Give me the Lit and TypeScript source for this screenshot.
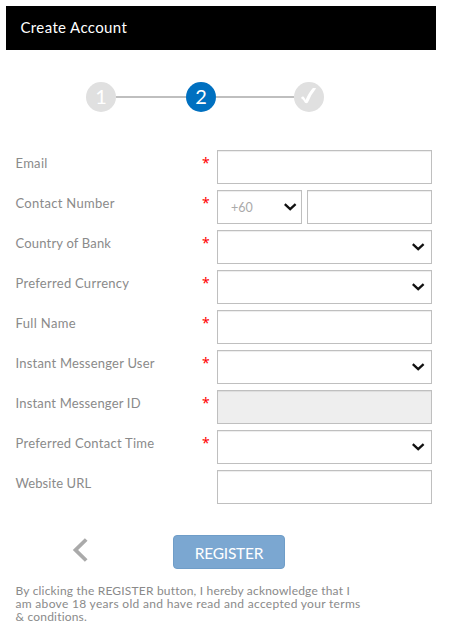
import { LitElement, html, css, svg, nothing } from "lit";
import { customElement } from "lit/decorators.js";
import { styleMap } from "lit/directives/style-map.js";

interface Field {
  label: string;
  kind: "text" | "select" | "phone" | "disabled";
  required: boolean;
  tracking: number;
}

const FIELDS: Field[] = [
  { label: "Email", kind: "text", required: true, tracking: 0.3 },
  { label: "Contact Number", kind: "phone", required: true, tracking: 0.3 },
  { label: "Country of Bank", kind: "select", required: true, tracking: 0.18 },
  { label: "Preferred Currency", kind: "select", required: true, tracking: 0.27 },
  { label: "Full Name", kind: "text", required: true, tracking: 0.35 },
  { label: "Instant Messenger User", kind: "select", required: true, tracking: 0.21 },
  { label: "Instant Messenger ID", kind: "disabled", required: true, tracking: 0.18 },
  { label: "Preferred Contact Time", kind: "select", required: true, tracking: 0.26 },
  { label: "Website URL", kind: "text", required: false, tracking: 0.08 },
];

const chevron = html`<svg class="chevron" width="14" height="10" viewBox="0 0 14 10" aria-hidden="true">
  ${svg`<path d="M1.8 2.2 L7.2 7.2 L12.6 2.2" fill="none" stroke="#111" stroke-width="2.3"/>`}
</svg>`;

@customElement("app-root")
export class AppRoot extends LitElement {
  static styles = css`
    :host {
      display: block;
      box-sizing: border-box;
      height: 635px;
      padding: 6px 14px 0 6px;
      overflow: hidden;
      background: #fff;
      color: #8a8a8a;
      font-family: Lato, "Liberation Sans", sans-serif;
    }
    * { box-sizing: border-box; }
    .header {
      height: 44px;
      margin: 0;
      padding-left: 14.5px;
      background: #000;
      color: #fff;
      font-size: 15px;
      font-weight: 400;
      line-height: 43px;
      letter-spacing: 0.37px;
    }
    .steps {
      display: flex;
      align-items: center;
      margin: 32px 0 0 80px;
    }
    .step {
      display: flex;
      align-items: center;
      justify-content: center;
      width: 30px;
      height: 30px;
      border-radius: 50%;
      background: #e0e0e0;
      color: #fff;
      font-size: 20px;
      line-height: 28px;
    }
    .step span { height: 30px; }
    .step.current { background: #0070c0; }
    .line { width: 70px; height: 2px; background: #bfbfbf; }
    .line.long { width: 78px; }
    .form {
      display: grid;
      grid-auto-rows: 34px;
      row-gap: 6px;
      margin: 38px 4px 0 9px;
    }
    .row {
      display: grid;
      grid-template-columns: 185px 17px 215px;
    }
    .label { padding-left: 0.5px; font-size: 13px; line-height: 27px; white-space: nowrap; }
    .star { padding-left: 2px; color: #f00; font: 14px/26px "Noto Sans", sans-serif; }
    .controls { display: flex; gap: 5px; }
    .box {
      display: flex;
      align-items: center;
      justify-content: space-between;
      flex: 1;
      min-width: 0;
      height: 34px;
      padding: 0 6px 0 13px;
      border: 1px solid #bfbfbf;
      background: #fff;
      box-shadow: inset 0 1px 1px rgba(0, 0, 0, 0.075);
      color: #aaa;
      font-size: 12.5px;
    }
    .box.code { flex: 0 0 85px; padding-right: 4px; }
    .box.disabled { background: #eee; }
    .chevron { display: block; flex: none; }
    .actions {
      display: flex;
      align-items: center;
      margin: 31px 0 0 65px;
    }
    .back { display: block; width: 20px; height: 26px; margin: -5px 82px 0 0; }
    .register {
      width: 112px;
      height: 34px;
      padding: 3px 0 0;
      border: 1px solid #6f9dc8;
      border-radius: 4px;
      background: #7ba7d1;
      color: #fff;
      font: 400 15.5px/1 Lato, "Liberation Sans", sans-serif;
      letter-spacing: -0.25px;
    }
    .terms {
      margin: 15px 0 0 9.5px;
      font-size: 12px;
      line-height: 13px;
      white-space: nowrap;
    }
    .terms span { display: block; letter-spacing: 0.19px; }
    .terms .wide { letter-spacing: 0.31px; }
  `;

  private control(kind: Field["kind"]) {
    if (kind === "phone") {
      return html`<div class="box code"><span>+60</span>${chevron}</div>
        <div class="box"></div>`;
    }
    if (kind === "select") return html`<div class="box"><span></span>${chevron}</div>`;
    return html`<div class="box ${kind}"></div>`;
  }

  render() {
    return html`
      <h1 class="header">Create Account</h1>
      <div class="steps">
        <div class="step"><span>1</span></div>
        <div class="line"></div>
        <div class="step current"><span>2</span></div>
        <div class="line long"></div>
        <div class="step">
          <svg width="30" height="30" viewBox="0 0 30 30" aria-hidden="true">
            <path d="M7 15.9 Q8 14.2 9.4 14.6 Q10.7 15.6 11.5 18.1 Q15 10.2 18.9 6.1 Q20.4 5.7 22.2 6.3 Q17 12.5 13.9 20.6 Q12.5 21.6 11 20.8 Q9.5 17.5 7 15.9Z" fill="#fff" />
          </svg>
        </div>
      </div>
      <div class="form">
        ${FIELDS.map(
          (f) => html`<div class="row">
            <span class="label" style=${styleMap({ letterSpacing: `${f.tracking}px` })}>${f.label}</span>
            <span class="star">${f.required ? "*" : nothing}</span>
            <div class="controls">${this.control(f.kind)}</div>
          </div>`,
        )}
      </div>
      <div class="actions">
        <svg class="back" viewBox="0 0 20 26" aria-label="Back">
          <path d="M15.2 2.5 L4.5 13 L15.2 23.5" fill="none" stroke="#aaa" stroke-width="3.8" />
        </svg>
        <button class="register">REGISTER</button>
      </div>
      <div class="terms">
        <span>By clicking the REGISTER button, I hereby acknowledge that I</span>
        <span class="wide">am above 18 years old and have read and accepted your terms</span>
        <span>&amp; conditions.</span>
      </div>
    `;
  }
}
